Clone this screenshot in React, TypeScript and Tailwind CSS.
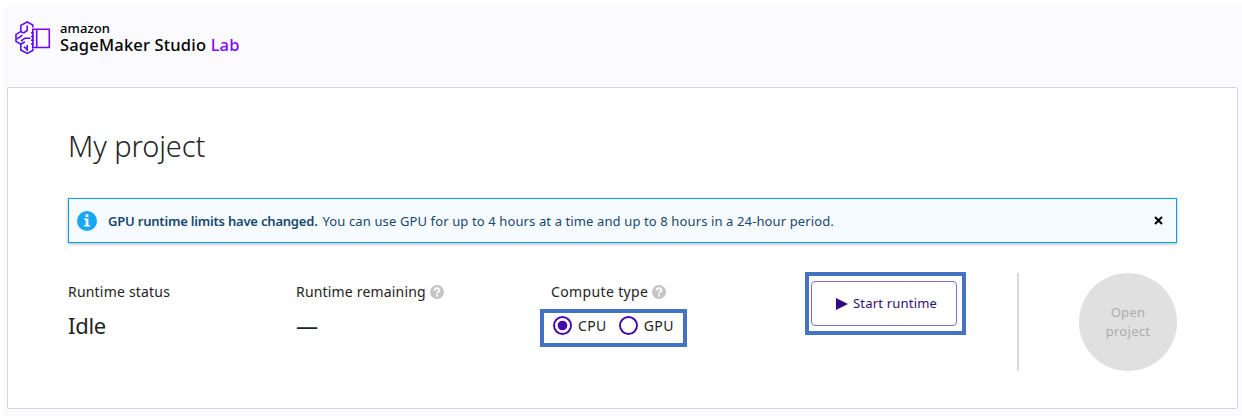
import React from "react";

function Logo() {
  return (
    <svg width="37" height="36" viewBox="0 0 37 36" fill="none" stroke="url(#brand)" strokeWidth="1.6">
      <defs>
        <linearGradient id="brand" x1="0" y1="36" x2="30" y2="0" gradientUnits="userSpaceOnUse">
          <stop stopColor="#3b14ff" />
          <stop offset="1" stopColor="#8a00ff" />
        </linearGradient>
      </defs>
      <path d="M18.8 7.5V5L13.2 2 6.8 5.4V11.6L2 14.4V21.4L6.8 24.2V30L13.2 33.4 18.8 30.4V28.5" />
      <path d="M13.2 5.5V10.5L9.5 13M2.5 19.2L8.5 15.2M6.8 11.6L9.5 13M7 21L11 18.2H16.5M6.8 24.2L10.8 21.8M13.2 25V31M9.8 26.8L13 29" />
      <path d="M18.8 9.3H35.3V27.5H18.8ZM22.7 9.3V27.5" />
      <path d="M17 12.8H20M17 16.5H20M17 20.2H20M17 24H20" />
    </svg>
  );
}

function Help() {
  return (
    <svg width="14" height="14" viewBox="0 0 14 14" fill="none">
      <circle cx="7" cy="7" r="7" fill="#c4c4c4" />
      <path d="M4.6 5.5C4.6 2.6 9.4 2.7 9.4 5.2C9.4 6.8 7.1 6.7 7.1 8.5" stroke="white" strokeWidth="2" />
      <path d="M6.1 9.5H8.1V11.5H6.1Z" fill="white" />
    </svg>
  );
}

function Radio({ label, checked }: { label: string; checked?: boolean }) {
  return (
    <label className="flex items-center">
      <svg width="19" height="19" viewBox="0 0 19 19" fill="none">
        <circle cx="9.5" cy="9.5" r="8.5" stroke="#4507a8" strokeWidth="1.9" />
        {checked && <circle cx="9.5" cy="9.5" r="4.8" fill="#4507a8" />}
      </svg>
      <span className="ml-[6px] text-[14px] leading-5 tracking-[0.4px]">{label}</span>
    </label>
  );
}

export default function App() {
  return (
    <div className="h-[418px] w-[1242px] overflow-hidden bg-white pt-[6px] pl-[3px] font-['Noto_Sans','Open_Sans',sans-serif] whitespace-nowrap text-[#232323]">
      <div className="h-[410px] bg-[#fafaff] pr-[4px] pl-[4px]">
        <header className="flex h-[81px] pt-[14px] pl-[7px]">
          <Logo />
          <div className="ml-[9px] pt-px text-black">
            <div className="text-[13px] leading-[14px] font-medium tracking-[0.1px]">amazon</div>
            <div className="text-[16.5px] leading-[20px] font-medium tracking-[0.18px]">
              SageMaker Studio <span className="text-[#7a0cff]">Lab</span>
            </div>
          </div>
        </header>
        <main className="h-[322px] w-[1231px] rounded-[2px] border border-[#d5d5dc] bg-white pl-[60px]">
          <h1 className="pt-[38px] text-[29px] leading-[40px] font-light tracking-[-0.1px]">My project</h1>
          <div className="mt-[32px] flex h-[45px] w-[1109px] items-center border border-[#00a1f1] bg-[#f6fbff] pr-[13px] pl-[8px] text-[13px] text-[#16486e] shadow-[0_1px_3px_rgba(0,0,0,0.3)]">
            <svg width="20" height="20" viewBox="0 0 20 20">
              <circle cx="10" cy="10" r="10" fill="#18a7f4" />
              <path d="M8.6 3.2H11.4V5.9H8.6ZM7.2 7.4H11.4V14H12.9V15.5H7.2V14H8.7V8.9H7.2Z" fill="white" />
            </svg>
            <p className="ml-[11px] flex gap-[5px] pt-[2px]">
              <b className="font-semibold tracking-[-0.2px]">GPU runtime limits have changed.</b>
              <span className="tracking-[0.12px]">
                You can use GPU for up to 4 hours at a time and up to 8 hours in a 24-hour period.
              </span>
            </p>
            <svg className="ml-auto" width="9" height="9" viewBox="0 0 9 9" stroke="black" strokeWidth="2">
              <path d="M1 1L8 8M8 1L1 8" />
            </svg>
          </div>
          <div className="flex pt-[29px]">
            <section className="w-[228px] pt-[10px]">
              <div className="text-[14px] leading-[20px] tracking-[0.2px]">Runtime status</div>
              <div className="mt-[8px] text-[22px] leading-[30px] tracking-[-0.3px]">Idle</div>
            </section>
            <section className="w-[244px] pt-[10px]">
              <div className="flex items-center gap-[4px] text-[14px] leading-[20px]">
                <span className="tracking-[0.18px]">Runtime remaining</span>
                <Help />
              </div>
              <div className="mt-[8px] text-[22px] leading-[30px]">—</div>
            </section>
            <section className="w-[265px] pt-[10px]">
              <div className="flex items-center gap-[4px] pl-[11px] text-[14px] leading-[20px]">
                <span className="tracking-[0.36px]">Compute type</span>
                <Help />
              </div>
              <div className="mt-[7px] flex h-[38px] w-[147px] gap-[12px] border-4 border-[#4472c4] pt-[3px] pl-[9px] *:h-[19px]">
                <Radio label="CPU" checked />
                <Radio label="GPU" />
              </div>
            </section>
            <div className="h-[63px] w-[161px] border-4 border-[#4472c4] pt-[5px] pl-[2px]">
              <button className="flex h-[45px] w-[146px] items-center rounded-[4px] border border-[#8069ef] pl-[24px] text-[13px] text-[#2b0f78]">
                <svg width="12" height="12" viewBox="0 0 12 12" fill="#300a81">
                  <path d="M0 0L12 6L0 12Z" />
                </svg>
                <span className="ml-[5px] tracking-[0.2px]">Start runtime</span>
              </button>
            </div>
            <div className="mt-px ml-[51px] h-[98px] w-[2px] bg-[#d9d9d9]" />
            <button className="mt-px ml-[60px] h-[98px] w-[98px] rounded-full bg-[#e0e0e0] text-[13px] leading-[19px] tracking-[0.3px] text-[#adadad]">
              Open
              <br />
              project
            </button>
          </div>
        </main>
      </div>
    </div>
  );
}
